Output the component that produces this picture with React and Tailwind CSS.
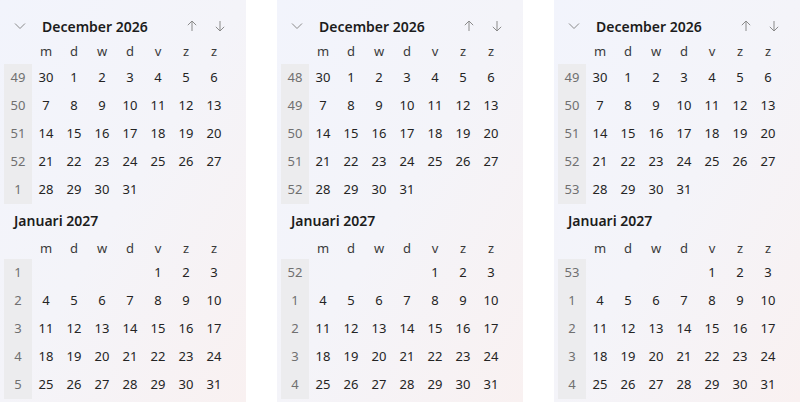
import React from "react";

const DOW = ["m", "d", "w", "d", "v", "z", "z"];

function buildWeeks(year, month) {
  const first = new Date(year, month, 1);
  const days = new Date(year, month + 1, 0).getDate();
  const offset = (first.getDay() + 6) % 7;
  const cells = [];
  for (let i = 0; i < offset; i++) cells.push(null);
  for (let d = 1; d <= days; d++) cells.push(d);
  while (cells.length % 7) cells.push(null);
  const weeks = [];
  for (let i = 0; i < cells.length; i += 7) weeks.push(cells.slice(i, i + 7));
  return weeks;
}

const decWeeks = buildWeeks(2026, 11).map((w, i) => (i === 0 ? [30, ...w.slice(1)] : w));
const janWeeks = buildWeeks(2027, 0);

function Chevron() {
  return (
    <svg width="12" height="8" viewBox="0 0 12 8" fill="none">
      <path d="M1 1.5 L6 6.5 L11 1.5" stroke="#8a8a8a" strokeWidth="1" />
    </svg>
  );
}

function ArrowUp() {
  return (
    <svg width="12" height="12" viewBox="0 0 12 12" fill="none">
      <path d="M6 11 V1.2 M1.8 5.2 L6 1 L10.2 5.2" stroke="#8a8a8a" strokeWidth="1" />
    </svg>
  );
}

function ArrowDown() {
  return (
    <svg width="12" height="12" viewBox="0 0 12 12" fill="none">
      <path d="M6 1 V10.8 M1.8 6.8 L6 11 L10.2 6.8" stroke="#8a8a8a" strokeWidth="1" />
    </svg>
  );
}

function DowRow({ h }) {
  return (
    <div className={`grid grid-cols-[28px_repeat(7,28px)] ${h} items-center`}>
      <div />
      {DOW.map((d, i) => (
        <div key={i} className="text-center text-[13px] text-[#3a3a3a]">
          {d}
        </div>
      ))}
    </div>
  );
}

function Month({ weeks, nums }) {
  return (
    <div className="grid grid-cols-[28px_repeat(7,28px)]">
      {weeks.map((w, wi) => (
        <React.Fragment key={wi}>
          <div className="h-[28px] flex items-center justify-center bg-[#ececee] text-[13px] text-[#707070]">
            {nums[wi]}
          </div>
          {w.map((d, di) => (
            <div key={di} className="h-[28px] flex items-center justify-center text-[13px] text-[#242424]">
              {d ?? ""}
            </div>
          ))}
        </React.Fragment>
      ))}
    </div>
  );
}

function Panel({ decNums, janNums }) {
  return (
    <div className="w-[246px] h-[402px] px-[4px] pt-[12px] bg-gradient-to-br from-[#f2f4fc] via-[#f4f4f9] to-[#f9f1f1] flex flex-col">
      <div className="h-[28px] flex items-center">
        <div className="w-[28px] flex justify-center pl-[4px]">
          <Chevron />
        </div>
        <div className="ml-[10px] text-[14px] font-semibold text-[#1c1c1c]">December 2026</div>
        <div className="ml-auto flex items-center mr-[8px]">
          <div className="w-[28px] flex justify-center"><ArrowUp /></div>
          <div className="w-[28px] flex justify-center"><ArrowDown /></div>
        </div>
      </div>
      <DowRow h="h-[24px]" />
      <Month weeks={decWeeks} nums={decNums} />
      <div className="h-[35px] flex items-center pl-[10px] pb-[2px] text-[14px] font-semibold text-[#1c1c1c]">
        Januari 2027
      </div>
      <DowRow h="h-[20px]" />
      <Month weeks={janWeeks} nums={janNums} />
    </div>
  );
}

export default function App() {
  return (
    <div
      className="w-[800px] h-[402px] bg-white flex gap-[31px] overflow-hidden"
      style={{ fontFamily: '"Noto Sans", "Open Sans", sans-serif' }}
    >
      <Panel decNums={[49, 50, 51, 52, 1]} janNums={[1, 2, 3, 4, 5]} />
      <Panel decNums={[48, 49, 50, 51, 52]} janNums={[52, 1, 2, 3, 4]} />
      <Panel decNums={[49, 50, 51, 52, 53]} janNums={[53, 1, 2, 3, 4]} />
    </div>
  );
}
